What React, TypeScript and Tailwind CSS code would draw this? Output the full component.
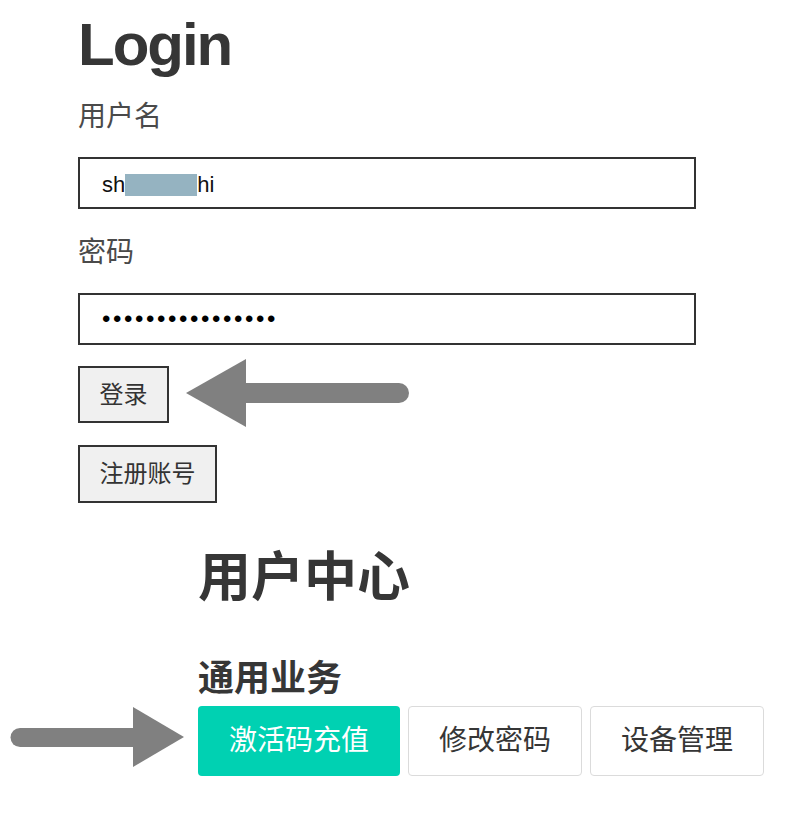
import React from "react";

const font = { fontFamily: '"Liberation Sans", "Noto Sans CJK SC", sans-serif' };

function LeftArrow() {
  return (
    <svg className="absolute left-[180px] top-[355px]" width="240" height="80" viewBox="180 355 240 80">
      <line x1="245" y1="393" x2="399" y2="393" stroke="#808080" strokeWidth="20" strokeLinecap="round" />
      <polygon points="186,393 246,359 246,427" fill="#808080" />
    </svg>
  );
}

function RightArrow() {
  return (
    <svg className="absolute left-0 top-[700px]" width="200" height="80" viewBox="0 700 200 80">
      <line x1="20" y1="737.5" x2="134" y2="737.5" stroke="#808080" strokeWidth="19" strokeLinecap="round" />
      <polygon points="184,737 133,707 133,767" fill="#808080" />
    </svg>
  );
}

export default function App() {
  return (
    <div className="relative w-[800px] h-[822px] bg-white overflow-hidden" style={font}>
      <div className="pl-[78px] w-[696px]">
        <h1 className="mt-[15px] text-[60px] leading-[60px] font-bold tracking-[-2px] text-[#363636]">Login</h1>
        <label className="block mt-[22px] text-[28px] leading-[40px] text-[#4a4a4a]">用户名</label>
        <div className="mt-[20px] h-[52px] border-2 border-[#333] flex items-center pl-[22px] pt-[3px] text-[22px] text-[#111]">
          <span>sh</span>
          <span className="inline-block w-[72px] h-[22px] bg-[#95b3c1]" />
          <span>hi</span>
        </div>
        <label className="block mt-[24px] text-[28px] leading-[40px] text-[#4a4a4a]">密码</label>
        <div className="mt-[20px] h-[52px] border-2 border-[#333] flex items-center pl-[22px] text-[24px] tracking-[2.6px] text-black">
          ••••••••••••••••
        </div>
        <button className="block mt-[21px] h-[57px] px-[19.5px] border-2 border-[#333] bg-[#f0f0f0] text-[24px] text-[#333]">登录</button>
        <button className="block mt-[22px] h-[58px] px-[19.5px] border-2 border-[#333] bg-[#f0f0f0] text-[24px] text-[#333]">注册账号</button>
      </div>
      <div className="pl-[198px]">
        <h2 className="mt-[45px] text-[53px] leading-[60px] font-bold text-[#363636]">用户中心</h2>
        <h3 className="mt-[51px] text-[36px] leading-[40px] font-bold text-[#363636]">通用业务</h3>
        <div className="mt-[7px] flex gap-[8px]">
          <button className="h-[70px] px-[30px] rounded-[4px] border border-transparent bg-[#00d1b2] text-white text-[28px]">激活码充值</button>
          <button className="h-[70px] px-[30px] rounded-[4px] border border-[#dbdbdb] bg-white text-[#363636] text-[28px]">修改密码</button>
          <button className="h-[70px] px-[30px] rounded-[4px] border border-[#dbdbdb] bg-white text-[#363636] text-[28px]">设备管理</button>
        </div>
      </div>
      <LeftArrow />
      <RightArrow />
    </div>
  );
}
